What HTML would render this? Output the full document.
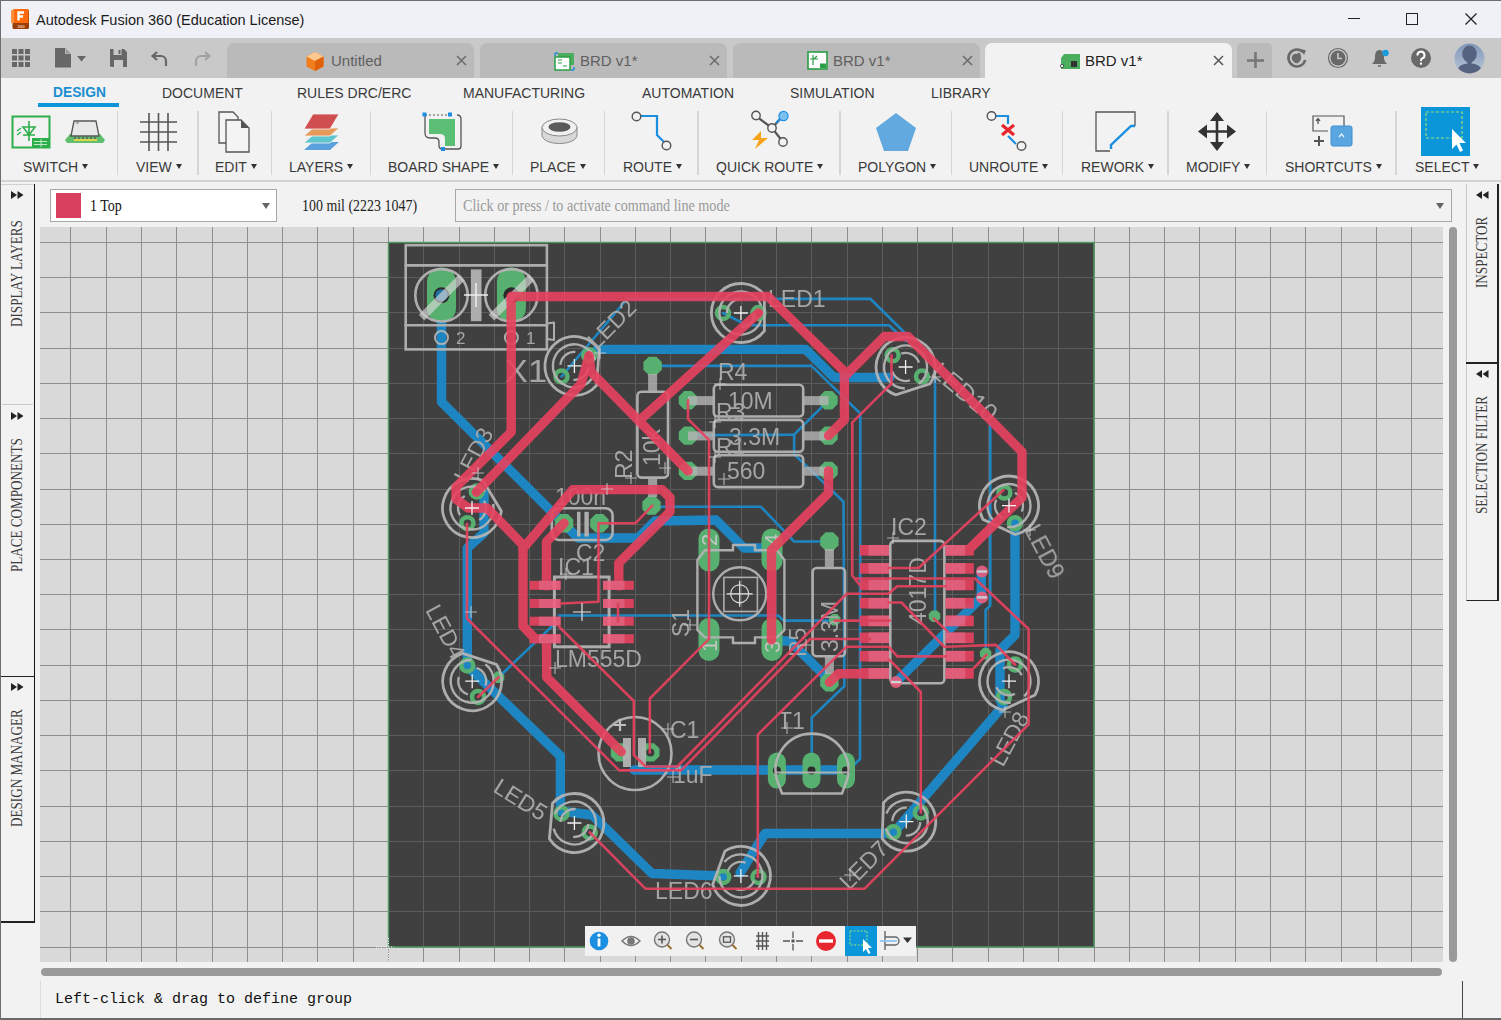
<!DOCTYPE html>
<html><head><meta charset="utf-8">
<style>
*{margin:0;padding:0;box-sizing:border-box}
html,body{width:1501px;height:1020px;overflow:hidden;background:#f2f2f2;font-family:"Liberation Sans",sans-serif;position:relative}
.a{position:absolute}
.tab{position:absolute;top:43px;height:35px;width:247px;background:#bababa;border-radius:7px 7px 0 0}
.tab .t{position:absolute;top:9px;font-size:15px;color:#606060;white-space:nowrap;line-height:18px}
.tab svg.x{position:absolute;top:12px}
.rt{position:absolute;top:85px;font-size:14px;color:#3a3a3a;white-space:nowrap;line-height:16px}
.lbl{position:absolute;top:159px;font-size:14px;color:#3a3a3a;white-space:nowrap;line-height:16px}
.lbl i{display:inline-block;margin-left:4px;width:0;height:0;border-left:3.5px solid transparent;border-right:3.5px solid transparent;border-top:5px solid #333;vertical-align:3px}
.sep{position:absolute;top:111px;width:1.5px;height:64px;background:#d6d6d6}
.serif{font-family:"Liberation Serif",serif}
.vt{position:absolute;font-family:"Liberation Serif",serif;font-size:16px;color:#3c3c3c;white-space:nowrap;transform-origin:0 0;transform:rotate(-90deg) scaleX(0.82);line-height:16px}
.ico{position:absolute}
</style></head><body>
<div class="a" style="left:0;top:0;width:1501px;height:38px;background:#f0f1f6"></div>
<svg class="a" style="left:11px;top:9px" width="19" height="20" viewBox="0 0 19 20">
  <path d="M3 0H16A2 2 0 0 1 18 2V19H2V2Z" fill="#c85200"/>
  <path d="M0 2L3 0H16A1.5 1.5 0 0 1 17 1.5V14H0Z" fill="#ff6b0a"/>
  <path d="M0 2L3 0V14H0Z" fill="#ff9040"/>
  <path d="M1.5 14H18V18.5A1.5 1.5 0 0 1 16.5 20H3A1.5 1.5 0 0 1 1.5 18.5Z" fill="#9a3d08"/>
  <path d="M7.5 11.5V3.5H13M7.5 7.5H12" fill="none" stroke="#fff" stroke-width="2.3"/>
  <text x="10" y="18.6" font-size="4.4" font-weight="bold" fill="#f0c8a8" text-anchor="middle" font-family="Liberation Sans">360</text>
</svg>
<div class="a" style="left:36px;top:11px;font-size:14.5px;color:#1a1a1a;white-space:nowrap;line-height:18px">Autodesk Fusion 360 (Education License)</div>
<div class="a" style="left:1348px;top:18px;width:12px;height:1.2px;background:#222"></div>
<div class="a" style="left:1406px;top:13px;width:12px;height:12px;border:1.3px solid #222"></div>
<svg class="a" style="left:1464px;top:12px" width="14" height="14" viewBox="0 0 14 14"><path d="M1.5 1.5L12.5 12.5M12.5 1.5L1.5 12.5" stroke="#222" stroke-width="1.3"/></svg>

<div class="a" style="left:0;top:38px;width:1501px;height:40px;background:#c9c9c9"></div>
<!-- tabbar left icons -->
<svg class="a" style="left:11px;top:48px" width="20" height="20" viewBox="0 0 20 20" fill="#676767">
  <rect x="1" y="1" width="5" height="5"/><rect x="7.5" y="1" width="5" height="5"/><rect x="14" y="1" width="5" height="5"/>
  <rect x="1" y="7.5" width="5" height="5"/><rect x="7.5" y="7.5" width="5" height="5"/><rect x="14" y="7.5" width="5" height="5"/>
  <rect x="1" y="14" width="5" height="5"/><rect x="7.5" y="14" width="5" height="5"/><rect x="14" y="14" width="5" height="5"/>
</svg>
<svg class="a" style="left:53px;top:47px" width="36" height="22" viewBox="0 0 36 22" fill="#676767">
  <path d="M2 1H12L18 7V20.5H2Z"/><path d="M12 1V7H18" fill="#c9c9c9" stroke="#676767" stroke-width="0"/>
  <path d="M12.5 1.5L17.5 6.5H12.5Z" fill="#9a9a9a"/>
  <path d="M24 9H33L28.5 14.5Z"/>
</svg>
<svg class="a" style="left:109px;top:48px" width="19" height="20" viewBox="0 0 19 20" fill="#676767">
  <path d="M1 1H15L18 4V19H2L1 18Z"/><rect x="4.5" y="1" width="8" height="6" fill="#c9c9c9"/><rect x="9.5" y="2" width="2" height="4" fill="#676767"/>
  <rect x="5" y="12" width="9" height="7" fill="#c9c9c9"/>
</svg>
<svg class="a" style="left:150px;top:50px" width="19" height="17" viewBox="0 0 19 17"><path d="M16 16V11A5 5 0 0 0 11 6H3M7 2L2.5 6L7 10" fill="none" stroke="#676767" stroke-width="2.2"/></svg>
<svg class="a" style="left:193px;top:50px" width="19" height="17" viewBox="0 0 19 17"><path d="M3 16V11A5 5 0 0 1 8 6H16M12 2L16.5 6L12 10" fill="none" stroke="#a2a2a2" stroke-width="2.2"/></svg>

<div class="tab" style="left:227px">
  <svg class="a" style="left:78px;top:8px" width="20" height="21" viewBox="0 0 20 21">
    <path d="M10 1L18.5 5.5V15.5L10 20L1.5 15.5V5.5Z" fill="#f07c1c"/>
    <path d="M10 1L18.5 5.5L10 10L1.5 5.5Z" fill="#ffc890"/>
    <path d="M10 10L18.5 5.5V15.5L10 20Z" fill="#e0600c"/>
  </svg>
  <div class="t" style="left:104px">Untitled</div>
  <svg class="x" style="left:229px" width="11" height="11" viewBox="0 0 11 11"><path d="M1 1L10 10M10 1L1 10" stroke="#6a6a6a" stroke-width="1.5"/></svg>
</div>
<div class="tab" style="left:480px">
  <svg class="a" style="left:74px;top:9px" width="21" height="19" viewBox="0 0 21 19">
    <rect x="4" y="1" width="16" height="12" fill="#4bae5e"/><rect x="1" y="5" width="15" height="13" fill="#fff" stroke="#2a9e45" stroke-width="1.5"/>
    <path d="M4 8H8M4 11H8M9 14H13" stroke="#2a9e45" stroke-width="1.2"/><path d="M1 1V4M1 1H4M20 18H17M20 18V15" stroke="#1f8fd6" stroke-width="1.5"/>
  </svg>
  <div class="t" style="left:100px">BRD v1*</div>
  <svg class="x" style="left:229px" width="11" height="11" viewBox="0 0 11 11"><path d="M1 1L10 10M10 1L1 10" stroke="#6a6a6a" stroke-width="1.5"/></svg>
</div>
<div class="tab" style="left:733px">
  <svg class="a" style="left:74px;top:8px" width="21" height="19" viewBox="0 0 21 19">
    <rect x="1" y="1" width="19" height="17" fill="#fff" stroke="#2a9e45" stroke-width="1.6"/>
    <path d="M6 4V14M3 8H11M7 8L10 5M13 13H19" stroke="#2a9e45" stroke-width="1.2"/><rect x="13" y="13" width="6" height="4" fill="#2a9e45"/>
  </svg>
  <div class="t" style="left:100px">BRD v1*</div>
  <svg class="x" style="left:229px" width="11" height="11" viewBox="0 0 11 11"><path d="M1 1L10 10M10 1L1 10" stroke="#6a6a6a" stroke-width="1.5"/></svg>
</div>
<div class="tab" style="left:985px;background:#f2f2f2">
  <svg class="a" style="left:74px;top:10px" width="22" height="17" viewBox="0 0 22 17">
    <path d="M5 1H21V16H2V5Z" fill="#4bae5e"/><rect x="12" y="8" width="6" height="6" fill="#333"/><circle cx="3" cy="13" r="1.6" fill="#fff" stroke="#333" stroke-width="0.8"/>
  </svg>
  <div class="t" style="left:100px;color:#1e1e1e">BRD v1*</div>
  <svg class="x" style="left:228px" width="11" height="11" viewBox="0 0 11 11"><path d="M1 1L10 10M10 1L1 10" stroke="#555" stroke-width="1.5"/></svg>
</div>
<div class="a" style="left:1237px;top:43px;width:35px;height:35px;background:#bababa;border-radius:5px 5px 0 0"></div>
<svg class="a" style="left:1246px;top:51px" width="19" height="18" viewBox="0 0 19 18"><path d="M1 9.5H18M9.5 1V17" stroke="#767676" stroke-width="2.6"/></svg>
<svg class="a" style="left:1286px;top:47px" width="22" height="22" viewBox="0 0 22 22">
  <path d="M17.5 5.5A8.5 8.5 0 1 0 19.2 13" fill="none" stroke="#696969" stroke-width="2.6"/>
  <path d="M15 2L20 3.5L18 8Z" fill="#696969"/>
  <path d="M6 9Q8 6 11 7Q12 5 14 6L15 9Q16 13 12 16Q9 17 7 14Q5 12 6 9Z" fill="#696969"/>
</svg>
<svg class="a" style="left:1327px;top:47px" width="22" height="22" viewBox="0 0 22 22">
  <circle cx="11" cy="11" r="9.5" fill="none" stroke="#696969" stroke-width="1.2"/>
  <circle cx="11" cy="11" r="7.5" fill="#696969"/>
  <path d="M11 6V11.5H15" fill="none" stroke="#c9c9c9" stroke-width="1.6"/>
</svg>
<svg class="a" style="left:1370px;top:47px" width="22" height="22" viewBox="0 0 22 22">
  <path d="M9.5 3C5.5 3 5 7 5 11C5 14 3 16 2 17H17C16 16 14 14 14 11C14 7 13.5 3 9.5 3Z" fill="#696969"/>
  <path d="M8 19H11" stroke="#696969" stroke-width="1.5"/>
  <circle cx="15.5" cy="6" r="3.2" fill="#1a9be0"/>
</svg>
<svg class="a" style="left:1410px;top:47px" width="22" height="22" viewBox="0 0 22 22">
  <circle cx="11" cy="11" r="10" fill="#696969"/>
  <path d="M7.5 8.5A3.5 3.5 0 1 1 12 11.5C11 12 11 12.5 11 14" fill="none" stroke="#fff" stroke-width="2"/>
  <rect x="10" y="15.5" width="2" height="2.2" fill="#fff"/>
</svg>
<svg class="a" style="left:1454px;top:43px" width="31" height="31" viewBox="0 0 31 31">
  <defs><linearGradient id="av" x1="0" y1="0" x2="0" y2="1"><stop offset="0" stop-color="#8098b8"/><stop offset="1" stop-color="#b8c6d8"/></linearGradient>
  <clipPath id="avc"><circle cx="15.5" cy="15.5" r="15"/></clipPath></defs>
  <circle cx="15.5" cy="15.5" r="15" fill="url(#av)"/>
  <g clip-path="url(#avc)" fill="#566380"><ellipse cx="15.5" cy="11" rx="7.3" ry="8.5"/><path d="M2 31C3 23 8 20.5 15.5 20.5C23 20.5 28 23 29 31Z"/><path d="M11 15L15.5 24L20 15Z"/></g>
</svg>
<div class="a" style="left:0;top:180px;width:1501px;height:1.5px;background:#d4d4d4"></div>
<div class="rt" style="left:53px;color:#1a8fd0;font-weight:bold;font-size:13.8px">DESIGN</div>
<div class="a" style="left:38px;top:103px;width:81px;height:4px;background:#0a96d8"></div>
<div class="rt" style="left:162px">DOCUMENT</div>
<div class="rt" style="left:297px">RULES DRC/ERC</div>
<div class="rt" style="left:463px">MANUFACTURING</div>
<div class="rt" style="left:642px">AUTOMATION</div>
<div class="rt" style="left:790px">SIMULATION</div>
<div class="rt" style="left:931px">LIBRARY</div>

<div class="sep" style="left:116.5px"></div><div class="sep" style="left:197px"></div><div class="sep" style="left:270.5px"></div><div class="sep" style="left:369.5px"></div>
<div class="sep" style="left:511.5px"></div><div class="sep" style="left:603.5px"></div><div class="sep" style="left:697px"></div><div class="sep" style="left:839px"></div>
<div class="sep" style="left:950.5px"></div><div class="sep" style="left:1061.5px"></div><div class="sep" style="left:1167px"></div><div class="sep" style="left:1265.5px"></div><div class="sep" style="left:1395px"></div>

<div class="lbl" style="left:23px">SWITCH<i></i></div>
<div class="lbl" style="left:136px">VIEW<i></i></div>
<div class="lbl" style="left:215px">EDIT<i></i></div>
<div class="lbl" style="left:289px">LAYERS<i></i></div>
<div class="lbl" style="left:388px">BOARD SHAPE<i></i></div>
<div class="lbl" style="left:530px">PLACE<i></i></div>
<div class="lbl" style="left:623px">ROUTE<i></i></div>
<div class="lbl" style="left:716px">QUICK ROUTE<i></i></div>
<div class="lbl" style="left:858px">POLYGON<i></i></div>
<div class="lbl" style="left:969px">UNROUTE<i></i></div>
<div class="lbl" style="left:1081px">REWORK<i></i></div>
<div class="lbl" style="left:1186px">MODIFY<i></i></div>
<div class="lbl" style="left:1285px">SHORTCUTS<i></i></div>
<div class="lbl" style="left:1415px">SELECT<i></i></div>

<!-- switch icon 1 -->
<svg class="ico" style="left:11px;top:115px" width="40" height="34" viewBox="0 0 40 34">
  <rect x="1.5" y="1.5" width="37" height="31" fill="none" stroke="#2eae4a" stroke-width="2"/>
  <path d="M18 6V26M12 12H24L18 20ZM12 20H24" fill="none" stroke="#2eae4a" stroke-width="1.6"/>
  <path d="M6 16L10 13M6 20L10 17" stroke="#2eae4a" stroke-width="1.3"/>
  <rect x="21" y="23" width="17" height="10" fill="#2eae4a"/>
  <path d="M23 26.5H36M23 29.5H36M30 24V32" stroke="#bfe8c8" stroke-width="1"/>
</svg>
<!-- switch icon 2 chip -->
<svg class="ico" style="left:64px;top:119px" width="42" height="26" viewBox="0 0 42 26">
  <path d="M1 21L6 15H36L41 21L39 24H3Z" fill="#5fbf6e"/>
  <path d="M7 17L10 2H32L35 17Z" fill="#e8e8e8" stroke="#555" stroke-width="1.3"/>
  <path d="M11 18V21M15 18V21M19 18V21M23 18V21M27 18V21M31 18V21" stroke="#555" stroke-width="1.4"/>
  <path d="M10 21H33" stroke="#e6d24a" stroke-width="2"/>
  <path d="M12 4H15" stroke="#777" stroke-width="1"/>
</svg>
<!-- view grid -->
<svg class="ico" style="left:139px;top:112px" width="39" height="40" viewBox="0 0 39 40"><path d="M10 1V39M19.5 1V39M29 1V39M1 10H38M1 20H38M1 30H38" stroke="#555" stroke-width="1.6"/></svg>
<!-- edit pages -->
<svg class="ico" style="left:217px;top:111px" width="36" height="42" viewBox="0 0 36 42">
  <path d="M2 1H16L21 6V32H2Z" fill="#f4f4f4" stroke="#555" stroke-width="1.3"/>
  <path d="M9 9H24L32 17V41H9Z" fill="#f4f4f4" stroke="#555" stroke-width="1.3"/>
  <path d="M24 9L32 17H24Z" fill="#555"/>
</svg>
<!-- layers -->
<svg class="ico" style="left:303px;top:112px" width="37" height="40" viewBox="0 0 37 40">
  <path d="M1 38L10 30H36L27 38Z" fill="#5aa0dd"/>
  <path d="M1 31L10 23H36L27 31Z" fill="#5ec6cc" stroke="#f2f2f2" stroke-width="0.8"/>
  <path d="M1 24L10 16H36L27 24Z" fill="#e89a5a" stroke="#f2f2f2" stroke-width="0.8"/>
  <path d="M1 17L10 2H36L27 17Z" fill="#cf4e50" stroke="#f2f2f2" stroke-width="0.8"/>
</svg>
<!-- board shape -->
<svg class="ico" style="left:421px;top:111px" width="42" height="41" viewBox="0 0 42 41">
  <path d="M4 4V22Q4 27 9 27H14Q18 27 18 31V35Q18 38 22 38H37Q40 38 40 35V8Q40 4 36 4" fill="none" stroke="#555" stroke-width="1.3"/>
  <path d="M4 4H26" stroke="#555" stroke-width="1" stroke-dasharray="2 2"/>
  <path d="M8 8H34V35H24V28Q24 23 19 23H8Z" fill="#5cbf76"/>
  <rect x="1.5" y="1.5" width="4" height="4" fill="#1c8ee0"/><rect x="27" y="1.5" width="4" height="4" fill="#1c8ee0"/><rect x="20" y="36" width="4" height="4" fill="#1c8ee0"/>
</svg>
<!-- place washer -->
<svg class="ico" style="left:541px;top:118px" width="37" height="27" viewBox="0 0 37 27">
  <path d="M1 9V17C1 22 9 25.5 18.5 25.5C28 25.5 36 22 36 17V9Z" fill="#d8d8d8" stroke="#8a8a8a" stroke-width="1"/>
  <ellipse cx="18.5" cy="9.5" rx="17.5" ry="8.5" fill="#f0f0f0" stroke="#8a8a8a" stroke-width="1"/>
  <ellipse cx="18.5" cy="9" rx="11" ry="4.8" fill="#5a5a5a"/>
</svg>
<!-- route -->
<svg class="ico" style="left:631px;top:111px" width="42" height="41" viewBox="0 0 42 41">
  <path d="M9 5H26V24L34 32" fill="none" stroke="#1c8ee0" stroke-width="2.2"/>
  <circle cx="5.5" cy="5.5" r="4.3" fill="#f2f2f2" stroke="#555" stroke-width="1.4"/>
  <circle cx="35.5" cy="34.5" r="4.3" fill="#f2f2f2" stroke="#555" stroke-width="1.4"/>
</svg>
<!-- quick route -->
<svg class="ico" style="left:750px;top:110px" width="42" height="43" viewBox="0 0 42 43">
  <path d="M6 6L22 18L33 6M22 18L33 32" fill="none" stroke="#555" stroke-width="2.2"/>
  <path d="M26 13L32 7" stroke="#1c8ee0" stroke-width="2.2"/>
  <circle cx="6" cy="5.5" r="4.2" fill="#f2f2f2" stroke="#555" stroke-width="1.4"/>
  <circle cx="22" cy="18" r="4.2" fill="#f2f2f2" stroke="#555" stroke-width="1.4"/>
  <circle cx="33" cy="32" r="4.2" fill="#f2f2f2" stroke="#555" stroke-width="1.4"/>
  <circle cx="33.5" cy="6" r="4.6" fill="#7cc0f0" stroke="#1c8ee0" stroke-width="1.2"/>
  <path d="M11 21L2 30H9L5 39L18 28H11Z" fill="#f5a31a"/>
</svg>
<!-- polygon -->
<svg class="ico" style="left:875px;top:112px" width="42" height="40" viewBox="0 0 42 40"><path d="M21 1L41 16L33 39H9L1 16Z" fill="#62a9df"/></svg>
<!-- unroute -->
<svg class="ico" style="left:986px;top:110px" width="42" height="43" viewBox="0 0 42 43">
  <path d="M9 6H22V14M22 26L30 34" fill="none" stroke="#1c8ee0" stroke-width="2.2"/>
  <path d="M16 15L28 25M28 15L16 25" stroke="#e8262e" stroke-width="3.2"/>
  <circle cx="5.5" cy="6" r="4.3" fill="#f2f2f2" stroke="#555" stroke-width="1.4"/>
  <circle cx="35.5" cy="36" r="4.3" fill="#f2f2f2" stroke="#555" stroke-width="1.4"/>
</svg>
<!-- rework -->
<svg class="ico" style="left:1095px;top:111px" width="42" height="41" viewBox="0 0 42 41">
  <path d="M40 15V1H1V40H15" fill="none" stroke="#555" stroke-width="1.3"/>
  <path d="M16 38V34L36 15H40" fill="none" stroke="#1c8ee0" stroke-width="2.4"/>
</svg>
<!-- modify -->
<svg class="ico" style="left:1197px;top:111px" width="40" height="41" viewBox="0 0 40 41">
  <path d="M20 4V37M3 20.5H37" stroke="#333" stroke-width="2.6"/>
  <path d="M20 1L27 10H13ZM20 40L27 31H13ZM1 20.5L10 13.5V27.5ZM39 20.5L30 13.5V27.5Z" fill="#333"/>
</svg>
<!-- shortcuts -->
<svg class="ico" style="left:1312px;top:115px" width="41" height="33" viewBox="0 0 41 33">
  <path d="M32 11V1H1V16H16" fill="none" stroke="#555" stroke-width="1.2"/>
  <path d="M6 9V4M4 6L6 3.5L8 6" fill="none" stroke="#555" stroke-width="1.3"/>
  <path d="M2 26H12M7 21V31" stroke="#555" stroke-width="2"/>
  <rect x="19" y="11" width="21" height="20" rx="2" fill="#5aa6e0" stroke="#3f8fd0" stroke-width="1"/>
  <path d="M27 22L29.5 19L32 22" fill="none" stroke="#e8f4ff" stroke-width="1.2"/>
</svg>
<!-- select -->
<svg class="ico" style="left:1421px;top:107px" width="49" height="49" viewBox="0 0 49 49">
  <rect x="0" y="0" width="49" height="49" fill="#0a96d8"/>
  <rect x="5" y="5" width="36" height="26" fill="none" stroke="#9be07a" stroke-width="1.2" stroke-dasharray="3 2"/>
  <path d="M31 22V42L35.5 37.5L39 45L42 43.5L38.5 36H45Z" fill="#fff"/>
</svg>
<!-- command row -->
<div class="a" style="left:50px;top:189px;width:227px;height:33px;background:#fff;border:1.5px solid #a8a8a8"></div>
<div class="a" style="left:56px;top:193px;width:25px;height:25px;background:#d9405e"></div>
<div class="a serif" style="left:89.5px;top:196.5px;font-size:16.5px;color:#111;line-height:18px;transform-origin:0 0;transform:scaleX(0.85)">1 Top</div>
<div class="a" style="left:262px;top:203px;width:0;height:0;border-left:4px solid transparent;border-right:4px solid transparent;border-top:6px solid #666"></div>
<div class="a serif" style="left:302px;top:196.5px;font-size:16.5px;color:#222;line-height:18px;transform-origin:0 0;transform:scaleX(0.845)">100 mil (2223 1047)</div>
<div class="a" style="left:455px;top:189px;width:997px;height:33px;border:1.5px solid #a8a8a8"></div>
<div class="a serif" style="left:463px;top:196.5px;font-size:16.5px;color:#999;line-height:18px;transform-origin:0 0;transform:scaleX(0.856)">Click or press / to activate command line mode</div>
<div class="a" style="left:1436px;top:203px;width:0;height:0;border-left:4px solid transparent;border-right:4px solid transparent;border-top:6px solid #666"></div>

<!-- left panels -->
<div class="a" style="left:1px;top:184px;width:33.5px;height:739px;border-right:1.4px solid #111"></div>
<div class="a" style="left:1px;top:184px;width:32px;height:1px;background:#d0d0d0"></div>
<div class="a" style="left:2px;top:404px;width:31px;height:1px;background:#c8c8c8"></div>
<div class="a" style="left:1px;top:675.5px;width:33px;height:1.5px;background:#222"></div>
<div class="a" style="left:1px;top:921px;width:33px;height:1.5px;background:#222"></div>
<svg class="a" style="left:11px;top:191px" width="13" height="8" viewBox="0 0 13 8"><path d="M0 0L6 4L0 8ZM6.5 0L12.5 4L6.5 8Z" fill="#222"/></svg>
<svg class="a" style="left:11px;top:412px" width="13" height="8" viewBox="0 0 13 8"><path d="M0 0L6 4L0 8ZM6.5 0L12.5 4L6.5 8Z" fill="#222"/></svg>
<svg class="a" style="left:11px;top:683px" width="13" height="8" viewBox="0 0 13 8"><path d="M0 0L6 4L0 8ZM6.5 0L12.5 4L6.5 8Z" fill="#222"/></svg>
<div class="vt" style="left:9px;top:327px">DISPLAY LAYERS</div>
<div class="vt" style="left:9px;top:572px">PLACE COMPONENTS</div>
<div class="vt" style="left:9px;top:827px">DESIGN MANAGER</div>

<!-- right panels -->
<div class="a" style="left:1466px;top:184px;width:33px;height:417px;border-left:1px solid #c8c8c8;border-right:2px solid #222;border-bottom:1.5px solid #222"></div>
<div class="a" style="left:1466px;top:362px;width:33px;height:1.5px;background:#222"></div>
<svg class="a" style="left:1476px;top:191px" width="13" height="8" viewBox="0 0 13 8"><path d="M6 0L0 4L6 8ZM12.5 0L6.5 4L12.5 8Z" fill="#222"/></svg>
<svg class="a" style="left:1476px;top:370px" width="13" height="8" viewBox="0 0 13 8"><path d="M6 0L0 4L6 8ZM12.5 0L6.5 4L12.5 8Z" fill="#222"/></svg>
<div class="vt" style="left:1474px;top:288px">INSPECTOR</div>
<div class="vt" style="left:1474px;top:514px">SELECTION FILTER</div>

<!-- scrollbars -->
<div class="a" style="left:1449px;top:227px;width:8px;height:735px;background:#9a9a9a;border-radius:4px"></div>
<div class="a" style="left:41px;top:968px;width:1401px;height:8px;background:#9a9a9a;border-radius:4px"></div>

<!-- status -->
<div class="a" style="left:40px;top:981px;width:1423px;height:39px;border-left:1px solid #dcdcdc;border-right:1.5px solid #444"></div>
<div class="a" style="left:0;top:1018px;width:1501px;height:2px;background:#6a6a6a"></div>
<div class="a" style="left:55px;top:991px;font-family:'Liberation Mono',monospace;font-size:15px;color:#111;line-height:18px">Left-click &amp; drag to define group</div>
<div class="a" style="left:0;top:0;width:1501px;height:1px;background:#6e6e6e"></div>
<div class="a" style="left:0;top:0;width:1px;height:1020px;background:#6e6e6e"></div>
<svg class="a" style="left:0;top:0" width="1501" height="1020" viewBox="0 0 1501 1020"><rect x="40" y="227" width="1403" height="735" fill="#d9d9d9"/><path d="M70.5 227V962M106.5 227V962M141.5 227V962M176.5 227V962M212.5 227V962M247.5 227V962M282.5 227V962M317.5 227V962M353.5 227V962M388.5 227V962M423.5 227V962M459.5 227V962M494.5 227V962M529.5 227V962M564.5 227V962M600.5 227V962M635.5 227V962M670.5 227V962M705.5 227V962M741.5 227V962M776.5 227V962M811.5 227V962M847.5 227V962M882.5 227V962M917.5 227V962M952.5 227V962M988.5 227V962M1023.5 227V962M1058.5 227V962M1094.5 227V962M1129.5 227V962M1164.5 227V962M1199.5 227V962M1235.5 227V962M1270.5 227V962M1305.5 227V962M1341.5 227V962M1376.5 227V962M1411.5 227V962M40 242.50H1443M40 277.50H1443M40 312.50H1443M40 348.50H1443M40 383.50H1443M40 418.50H1443M40 453.50H1443M40 489.50H1443M40 524.50H1443M40 559.50H1443M40 594.50H1443M40 629.50H1443M40 665.50H1443M40 700.50H1443M40 735.50H1443M40 770.50H1443M40 806.50H1443M40 841.50H1443M40 876.50H1443M40 911.50H1443M40 947.50H1443" stroke="#8e8e8e" stroke-width="1"/><rect x="388.5" y="242.5" width="705.5" height="704.5" fill="#404040"/><path d="M423.50 242.5V947M459.50 242.5V947M494.50 242.5V947M529.50 242.5V947M564.50 242.5V947M600.50 242.5V947M635.50 242.5V947M670.50 242.5V947M705.50 242.5V947M741.50 242.5V947M776.50 242.5V947M811.50 242.5V947M847.50 242.5V947M882.50 242.5V947M917.50 242.5V947M952.50 242.5V947M988.50 242.5V947M1023.50 242.5V947M1058.50 242.5V947M388.5 277.50H1094M388.5 312.50H1094M388.5 348.50H1094M388.5 383.50H1094M388.5 418.50H1094M388.5 453.50H1094M388.5 489.50H1094M388.5 524.50H1094M388.5 559.50H1094M388.5 594.50H1094M388.5 629.50H1094M388.5 665.50H1094M388.5 700.50H1094M388.5 735.50H1094M388.5 770.50H1094M388.5 806.50H1094M388.5 841.50H1094M388.5 876.50H1094M388.5 911.50H1094" stroke="#5c5c5c" stroke-width="1"/><rect x="388.5" y="242.5" width="705.5" height="704.5" fill="none" stroke="#4f9a62" stroke-width="1.4"/><polyline points="441.5,295.0 441.5,402.0 520.0,480.0 563.0,523.0 578.0,538.0 638.0,538.0 655.0,521.0 716.0,520.0 744.0,548.0 771.0,548.0" fill="none" stroke="#1d86c2" stroke-width="9.4" stroke-linejoin="round" stroke-linecap="round" opacity="1"/><polyline points="597.0,349.4 805.6,349.4 834.0,377.5 890.0,377.5" fill="none" stroke="#1d86c2" stroke-width="9.4" stroke-linejoin="round" stroke-linecap="round" opacity="1"/><polyline points="467.3,666.0 467.3,548.0 484.0,533.0 484.0,494.0" fill="none" stroke="#1d86c2" stroke-width="9.4" stroke-linejoin="round" stroke-linecap="round" opacity="1"/><polyline points="467.3,666.0 560.4,756.0 560.4,811.0 592.0,815.0 652.0,873.5 723.0,876.0" fill="none" stroke="#1d86c2" stroke-width="9.4" stroke-linejoin="round" stroke-linecap="round" opacity="1"/><polyline points="740.0,873.0 765.0,833.5 855.0,833.5 893.0,833.5 1003.0,706.0 1000.0,700.0 1000.0,650.0 1015.0,635.0 1015.0,523.0" fill="none" stroke="#1d86c2" stroke-width="9.4" stroke-linejoin="round" stroke-linecap="round" opacity="1"/><polyline points="775.0,641.0 790.0,641.0 829.0,680.0" fill="none" stroke="#1d86c2" stroke-width="9.4" stroke-linejoin="round" stroke-linecap="round" opacity="1"/><polyline points="982.0,597.0 896.0,682.0" fill="none" stroke="#1d86c2" stroke-width="9.4" stroke-linejoin="round" stroke-linecap="round" opacity="1"/><polyline points="981.3,571.2 981.3,597.0" fill="none" stroke="#1d86c2" stroke-width="9.4" stroke-linejoin="round" stroke-linecap="round" opacity="1"/><polyline points="634.0,770.0 846.0,770.0" fill="none" stroke="#1d86c2" stroke-width="9.4" stroke-linejoin="round" stroke-linecap="round" opacity="1"/><polyline points="561.5,376.5 627.0,299.0 870.3,298.8 906.0,334.0" fill="none" stroke="#1d86c2" stroke-width="2.6" stroke-linejoin="round" stroke-linecap="round" opacity="1"/><polyline points="723.0,313.0 746.8,325.2 889.0,325.2 906.0,341.0" fill="none" stroke="#1d86c2" stroke-width="2.6" stroke-linejoin="round" stroke-linecap="round" opacity="1"/><polyline points="652.6,365.9 811.5,365.9 860.3,413.5 860.0,759.0 849.2,769.8" fill="none" stroke="#1d86c2" stroke-width="2.6" stroke-linejoin="round" stroke-linecap="round" opacity="1"/><polyline points="935.0,378.8 935.0,616.2" fill="none" stroke="#1d86c2" stroke-width="2.6" stroke-linejoin="round" stroke-linecap="round" opacity="1"/><polyline points="990.3,423.5 990.3,605.6 985.6,610.0 985.6,653.8" fill="none" stroke="#1d86c2" stroke-width="2.6" stroke-linejoin="round" stroke-linecap="round" opacity="1"/><polyline points="828.5,400.3 794.1,434.7 688.0,435.3" fill="none" stroke="#1d86c2" stroke-width="2.6" stroke-linejoin="round" stroke-linecap="round" opacity="1"/><polyline points="794.1,434.7 794.1,454.1 843.5,501.8 844.4,686.0 811.8,717.6 811.8,770.0" fill="none" stroke="#1d86c2" stroke-width="2.6" stroke-linejoin="round" stroke-linecap="round" opacity="1"/><polyline points="829.4,541.5 794.1,541.5 760.9,506.8 652.0,506.8" fill="none" stroke="#1d86c2" stroke-width="2.6" stroke-linejoin="round" stroke-linecap="round" opacity="1"/><polyline points="558.8,615.5 778.2,615.5 783.5,620.6 834.7,620.6" fill="none" stroke="#1d86c2" stroke-width="2.6" stroke-linejoin="round" stroke-linecap="round" opacity="1"/><polyline points="551.8,626.5 498.6,677.3" fill="none" stroke="#1d86c2" stroke-width="2.6" stroke-linejoin="round" stroke-linecap="round" opacity="1"/><polygon points="661.8,362.1 661.8,369.7 656.4,375.1 648.8,375.1 643.4,369.7 643.4,362.1 648.8,356.7 656.4,356.7" fill="#57b06f"/><polygon points="660.7,501.8 660.7,509.4 655.3,514.8 647.7,514.8 642.3,509.4 642.3,501.8 647.7,496.4 655.3,496.4" fill="#57b06f"/><polygon points="697.2,396.5 697.2,404.1 691.8,409.5 684.2,409.5 678.8,404.1 678.8,396.5 684.2,391.1 691.8,391.1" fill="#57b06f"/><polygon points="697.2,431.8 697.2,439.4 691.8,444.8 684.2,444.8 678.8,439.4 678.8,431.8 684.2,426.4 691.8,426.4" fill="#57b06f"/><polygon points="697.2,467.1 697.2,474.7 691.8,480.1 684.2,480.1 678.8,474.7 678.8,467.1 684.2,461.7 691.8,461.7" fill="#57b06f"/><polygon points="837.7,396.5 837.7,404.1 832.3,409.5 824.7,409.5 819.3,404.1 819.3,396.5 824.7,391.1 832.3,391.1" fill="#57b06f"/><polygon points="837.7,431.8 837.7,439.4 832.3,444.8 824.7,444.8 819.3,439.4 819.3,431.8 824.7,426.4 832.3,426.4" fill="#57b06f"/><polygon points="837.7,467.1 837.7,474.7 832.3,480.1 824.7,480.1 819.3,474.7 819.3,467.1 824.7,461.7 832.3,461.7" fill="#57b06f"/><polygon points="838.6,537.7 838.6,545.3 833.2,550.7 825.6,550.7 820.2,545.3 820.2,537.7 825.6,532.3 833.2,532.3" fill="#57b06f"/><polygon points="838.6,678.5 838.6,686.1 833.2,691.5 825.6,691.5 820.2,686.1 820.2,678.5 825.6,673.1 833.2,673.1" fill="#57b06f"/><polygon points="573.3,519.4 573.3,527.0 567.9,532.4 560.3,532.4 554.9,527.0 554.9,519.4 560.3,514.0 567.9,514.0" fill="#57b06f"/><polygon points="608.6,519.4 608.6,527.0 603.2,532.4 595.6,532.4 590.2,527.0 590.2,519.4 595.6,514.0 603.2,514.0" fill="#57b06f"/><polygon points="659.5,748.6 659.5,756.2 654.1,761.6 646.5,761.6 641.1,756.2 641.1,748.6 646.5,743.2 654.1,743.2" fill="#57b06f"/><polygon points="629.2,748.6 629.2,756.2 623.8,761.6 616.2,761.6 610.8,756.2 610.8,748.6 616.2,743.2 623.8,743.2" fill="#57b06f"/><polygon points="940.2,613.8 940.2,618.6 936.9,621.9 932.1,621.9 928.8,618.6 928.8,613.8 932.1,610.5 936.9,610.5" fill="#57b06f"/><polygon points="991.3,651.4 991.3,656.2 988.0,659.5 983.2,659.5 979.9,656.2 979.9,651.4 983.2,648.1 988.0,648.1" fill="#57b06f"/><polygon points="840.4,617.3 840.4,622.1 837.1,625.4 832.3,625.4 829.0,622.1 829.0,617.3 832.3,614.0 837.1,614.0" fill="#57b06f"/><polygon points="504.3,674.9 504.3,679.7 501.0,683.0 496.2,683.0 492.9,679.7 492.9,674.9 496.2,671.6 501.0,671.6" fill="#57b06f"/><rect x="427.0" y="267.5" width="29" height="55" rx="14.5" fill="#57b06f"/><rect x="496.9" y="267.5" width="29" height="55" rx="14.5" fill="#57b06f"/><rect x="698.5" y="618.0" width="21" height="43" rx="10.5" fill="#57b06f"/><rect x="698.5" y="528.5" width="21" height="43" rx="10.5" fill="#57b06f"/><rect x="761.5" y="528.5" width="21" height="43" rx="10.5" fill="#57b06f"/><rect x="761.5" y="618.0" width="21" height="43" rx="10.5" fill="#57b06f"/><rect x="767.9" y="752.6" width="18" height="36" rx="9.0" fill="#57b06f"/><rect x="802.5" y="752.6" width="18" height="36" rx="9.0" fill="#57b06f"/><rect x="837.0" y="752.6" width="18" height="36" rx="9.0" fill="#57b06f"/><circle cx="561.5" cy="376.5" r="6" fill="none" stroke="#57b06f" stroke-width="4.5"/><circle cx="589.2" cy="355.3" r="6" fill="none" stroke="#57b06f" stroke-width="4.5"/><circle cx="723" cy="313" r="6" fill="none" stroke="#57b06f" stroke-width="4.5"/><circle cx="758.5" cy="313" r="6" fill="none" stroke="#57b06f" stroke-width="4.5"/><circle cx="892.6" cy="355.3" r="6" fill="none" stroke="#57b06f" stroke-width="4.5"/><circle cx="922" cy="376.5" r="6" fill="none" stroke="#57b06f" stroke-width="4.5"/><circle cx="476.8" cy="491.5" r="6" fill="none" stroke="#57b06f" stroke-width="4.5"/><circle cx="467.4" cy="523.2" r="6" fill="none" stroke="#57b06f" stroke-width="4.5"/><circle cx="467.3" cy="665.5" r="6" fill="none" stroke="#57b06f" stroke-width="4.5"/><circle cx="478" cy="696.9" r="6" fill="none" stroke="#57b06f" stroke-width="4.5"/><circle cx="1004.4" cy="492.6" r="6" fill="none" stroke="#57b06f" stroke-width="4.5"/><circle cx="1015" cy="523.2" r="6" fill="none" stroke="#57b06f" stroke-width="4.5"/><circle cx="1015" cy="664.5" r="6" fill="none" stroke="#57b06f" stroke-width="4.5"/><circle cx="1004" cy="696.9" r="6" fill="none" stroke="#57b06f" stroke-width="4.5"/><circle cx="561.5" cy="813.5" r="6" fill="none" stroke="#57b06f" stroke-width="4.5"/><circle cx="589.7" cy="832.4" r="6" fill="none" stroke="#57b06f" stroke-width="4.5"/><circle cx="723.2" cy="877" r="6" fill="none" stroke="#57b06f" stroke-width="4.5"/><circle cx="758.5" cy="877" r="6" fill="none" stroke="#57b06f" stroke-width="4.5"/><circle cx="920.8" cy="812.5" r="6" fill="none" stroke="#57b06f" stroke-width="4.5"/><circle cx="893.3" cy="832.2" r="6" fill="none" stroke="#57b06f" stroke-width="4.5"/><circle cx="776.9" cy="770.6" r="4" fill="#2c2c2c"/><circle cx="811.5" cy="770.6" r="4" fill="#2c2c2c"/><circle cx="846" cy="770.6" r="4" fill="#2c2c2c"/><circle cx="650.3" cy="752.4" r="4" fill="#3a3a3a"/><circle cx="441.5" cy="295.3" r="8" fill="#2a2a2a"/><circle cx="441.5" cy="295.3" r="6" fill="#1d86c2" opacity="0.8"/><circle cx="511.4" cy="295.3" r="8" fill="#2a2a2a"/><g opacity="0.95"><rect x="405.7" y="245.2" width="141.2" height="104.19999999999999" rx="0" fill="none" stroke="#b4b4b4" stroke-width="2.6"/><polyline points="405.7,265.4 546.9,265.4" fill="none" stroke="#b4b4b4" stroke-width="2.6" stroke-linejoin="round" stroke-linecap="round" opacity="1"/><polyline points="405.7,325.2 546.9,325.2" fill="none" stroke="#b4b4b4" stroke-width="2.6" stroke-linejoin="round" stroke-linecap="round" opacity="1"/><polyline points="546.9,323.5 554.0,322.5 554.0,340.0 546.9,339.0" fill="none" stroke="#b4b4b4" stroke-width="2" stroke-linejoin="round" stroke-linecap="round" opacity="1"/><circle cx="441.5" cy="295.3" r="26.2" fill="none" stroke="#b4b4b4" stroke-width="2.6"/><circle cx="511.4" cy="295.3" r="26.2" fill="none" stroke="#b4b4b4" stroke-width="2.6"/><rect x="470.9" y="269.4" width="10.6" height="51.8" fill="#b4b4b4"/><path d="M421.5 317.6L461.5 277.6M491.4 317.6L531.4 277.6" stroke="#d8d8d8" stroke-width="8" opacity="0.7"/><circle cx="441.5" cy="337.6" r="6.5" fill="none" stroke="#b4b4b4" stroke-width="2"/><circle cx="511.4" cy="337.6" r="6.5" fill="none" stroke="#b4b4b4" stroke-width="2"/><text x="456" y="343.5" font-size="17" fill="#ababab" font-family="Liberation Sans" text-anchor="start">2</text><text x="526" y="343.5" font-size="17" fill="#ababab" font-family="Liberation Sans" text-anchor="start">1</text><text x="505" y="381.5" font-size="32" fill="#ababab" font-family="Liberation Sans" textLength="42" lengthAdjust="spacingAndGlyphs">X1</text><path d="M596.60 385.33A29.5 29.5 0 1 1 599.09 349.75Z" fill="none" stroke="#b4b4b4" stroke-width="2.8"/><path d="M594.03 374.66A21.5 21.5 0 1 1 595.06 359.95" fill="none" stroke="#b4b4b4" stroke-width="2.4"/><path d="M560.43 364.92A14 14 0 0 1 575.38 351.93" fill="none" stroke="#b4b4b4" stroke-width="2.3"/><path d="M588.37 366.88A14 14 0 0 1 573.42 379.87" fill="none" stroke="#b4b4b4" stroke-width="2.3"/><path d="M764.40 330.83A29.5 29.5 0 1 1 764.40 295.17Z" fill="none" stroke="#b4b4b4" stroke-width="2.8"/><path d="M761.10 320.37A21.5 21.5 0 1 1 761.10 305.63" fill="none" stroke="#b4b4b4" stroke-width="2.4"/><path d="M726.90 313.00A14 14 0 0 1 740.90 299.00" fill="none" stroke="#b4b4b4" stroke-width="2.3"/><path d="M754.90 313.00A14 14 0 0 1 740.90 327.00" fill="none" stroke="#b4b4b4" stroke-width="2.3"/><path d="M895.90 394.86A29.5 29.5 0 1 1 929.82 383.84Z" fill="none" stroke="#b4b4b4" stroke-width="2.8"/><path d="M904.83 388.49A21.5 21.5 0 1 1 918.85 383.93" fill="none" stroke="#b4b4b4" stroke-width="2.4"/><path d="M901.27 353.69A14 14 0 0 1 918.91 362.67" fill="none" stroke="#b4b4b4" stroke-width="2.3"/><path d="M909.93 380.31A14 14 0 0 1 892.29 371.33" fill="none" stroke="#b4b4b4" stroke-width="2.3"/><path d="M501.33 511.18A29.5 29.5 0 1 1 482.96 480.61Z" fill="none" stroke="#b4b4b4" stroke-width="2.8"/><path d="M493.11 503.92A21.5 21.5 0 1 1 485.51 491.28" fill="none" stroke="#b4b4b4" stroke-width="2.4"/><path d="M460.00 515.21A14 14 0 0 1 464.79 496.00" fill="none" stroke="#b4b4b4" stroke-width="2.3"/><path d="M484.00 500.79A14 14 0 0 1 479.21 520.00" fill="none" stroke="#b4b4b4" stroke-width="2.3"/><path d="M496.42 664.36A29.5 29.5 0 1 1 462.50 653.34Z" fill="none" stroke="#b4b4b4" stroke-width="2.8"/><path d="M485.45 664.27A21.5 21.5 0 1 1 471.43 659.71" fill="none" stroke="#b4b4b4" stroke-width="2.4"/><path d="M467.87 694.51A14 14 0 0 1 458.89 676.87" fill="none" stroke="#b4b4b4" stroke-width="2.3"/><path d="M476.53 667.89A14 14 0 0 1 485.51 685.53" fill="none" stroke="#b4b4b4" stroke-width="2.3"/><path d="M982.91 519.36A29.5 29.5 0 1 1 1015.23 534.43Z" fill="none" stroke="#b4b4b4" stroke-width="2.8"/><path d="M993.78 520.79A21.5 21.5 0 1 1 1007.15 527.02" fill="none" stroke="#b4b4b4" stroke-width="2.4"/><path d="M1014.92 492.91A14 14 0 0 1 1021.69 511.52" fill="none" stroke="#b4b4b4" stroke-width="2.3"/><path d="M1003.08 518.29A14 14 0 0 1 996.31 499.68" fill="none" stroke="#b4b4b4" stroke-width="2.3"/><path d="M1002.77 710.03A29.5 29.5 0 1 1 1035.09 694.96Z" fill="none" stroke="#b4b4b4" stroke-width="2.8"/><path d="M1010.85 702.62A21.5 21.5 0 1 1 1024.22 696.39" fill="none" stroke="#b4b4b4" stroke-width="2.4"/><path d="M1003.08 668.51A14 14 0 0 1 1021.69 675.28" fill="none" stroke="#b4b4b4" stroke-width="2.3"/><path d="M1014.92 693.89A14 14 0 0 1 996.31 687.12" fill="none" stroke="#b4b4b4" stroke-width="2.3"/><path d="M552.54 803.19A29.5 29.5 0 1 1 549.44 838.72Z" fill="none" stroke="#b4b4b4" stroke-width="2.8"/><path d="M554.92 813.90A21.5 21.5 0 1 1 553.64 828.58" fill="none" stroke="#b4b4b4" stroke-width="2.4"/><path d="M588.35 824.22A14 14 0 0 1 573.18 836.95" fill="none" stroke="#b4b4b4" stroke-width="2.3"/><path d="M560.45 821.78A14 14 0 0 1 575.62 809.05" fill="none" stroke="#b4b4b4" stroke-width="2.3"/><path d="M724.92 851.11A29.5 29.5 0 1 1 712.72 884.62Z" fill="none" stroke="#b4b4b4" stroke-width="2.8"/><path d="M724.44 862.06A21.5 21.5 0 1 1 719.40 875.92" fill="none" stroke="#b4b4b4" stroke-width="2.4"/><path d="M754.06 880.69A14 14 0 0 1 736.11 889.06" fill="none" stroke="#b4b4b4" stroke-width="2.3"/><path d="M727.74 871.11A14 14 0 0 1 745.69 862.74" fill="none" stroke="#b4b4b4" stroke-width="2.3"/><path d="M883.44 802.96A29.5 29.5 0 1 1 882.19 838.60Z" fill="none" stroke="#b4b4b4" stroke-width="2.8"/><path d="M886.37 813.53A21.5 21.5 0 1 1 885.86 828.26" fill="none" stroke="#b4b4b4" stroke-width="2.4"/><path d="M920.29 822.09A14 14 0 0 1 905.81 835.59" fill="none" stroke="#b4b4b4" stroke-width="2.3"/><path d="M892.31 821.11A14 14 0 0 1 906.79 807.61" fill="none" stroke="#b4b4b4" stroke-width="2.3"/><rect x="713.8" y="384.70000000000005" width="89.40000000000009" height="31.799999999999955" rx="4" fill="none" stroke="#b4b4b4" stroke-width="2.6"/><rect x="688" y="396.1" width="25.799999999999955" height="9" fill="#b4b4b4" opacity="0.85"/><rect x="803.2" y="396.1" width="25.299999999999955" height="9" fill="#b4b4b4" opacity="0.85"/><rect x="713.8" y="420.0" width="89.40000000000009" height="31.799999999999955" rx="4" fill="none" stroke="#b4b4b4" stroke-width="2.6"/><rect x="688" y="431.4" width="25.799999999999955" height="9" fill="#b4b4b4" opacity="0.85"/><rect x="803.2" y="431.4" width="25.299999999999955" height="9" fill="#b4b4b4" opacity="0.85"/><rect x="713.8" y="455.3" width="89.40000000000009" height="31.799999999999955" rx="4" fill="none" stroke="#b4b4b4" stroke-width="2.6"/><rect x="688" y="466.7" width="25.799999999999955" height="9" fill="#b4b4b4" opacity="0.85"/><rect x="803.2" y="466.7" width="25.299999999999955" height="9" fill="#b4b4b4" opacity="0.85"/><rect x="637.4" y="391.8" width="30.600000000000023" height="85.80000000000001" rx="4" fill="none" stroke="#b4b4b4" stroke-width="2.6"/><rect x="648.1" y="374" width="9" height="18" fill="#b4b4b4" opacity="0.85"/><rect x="648.1" y="477" width="9" height="20" fill="#b4b4b4" opacity="0.85"/><rect x="812.6" y="568" width="32.39999999999998" height="88.20000000000005" rx="4" fill="none" stroke="#b4b4b4" stroke-width="2.6"/><rect x="824.9" y="549" width="9" height="19" fill="#b4b4b4" opacity="0.85"/><rect x="824.9" y="656" width="9" height="18" fill="#b4b4b4" opacity="0.85"/><rect x="551.8" y="508.2" width="60.80000000000007" height="31.80000000000001" rx="7" fill="none" stroke="#b4b4b4" stroke-width="2.6"/><rect x="577" y="511.8" width="3.5" height="24.7" fill="#b4b4b4"/><rect x="584.4" y="511.8" width="4.4" height="24.7" fill="#b4b4b4"/><rect x="554.4" y="577" width="54.700000000000045" height="69.79999999999995" rx="0" fill="none" stroke="#b4b4b4" stroke-width="3"/><rect x="890.3" y="540.9" width="54.10000000000002" height="142.30000000000007" rx="4" fill="none" stroke="#b4b4b4" stroke-width="2.6"/><path d="M697.4 560V630L705 637.4H733V643H755V637.4H777L784.4 630V560L777 550.3H755V545H733V550.3H705Z" fill="none" stroke="#b4b4b4" stroke-width="2.4"/><circle cx="739.7" cy="593.8" r="26.5" fill="none" stroke="#b4b4b4" stroke-width="2.4"/><rect x="723.9" y="577.4" width="33.5" height="34.10000000000002" rx="0" fill="none" stroke="#b4b4b4" stroke-width="1.6"/><circle cx="739.7" cy="593.8" r="9" fill="none" stroke="#dddddd" stroke-width="1.2"/><circle cx="635" cy="753.5" r="36.5" fill="none" stroke="#b4b4b4" stroke-width="2.6"/><rect x="623" y="738" width="8" height="29" fill="#b4b4b4"/><rect x="638" y="738" width="8" height="29" fill="#b4b4b4"/><path d="M782 793.5H842L847 780A36.4 36.4 0 1 0 777 780Z" fill="none" stroke="#b4b4b4" stroke-width="2.6"/><polyline points="776.0,772.5 847.0,772.5" fill="none" stroke="#b4b4b4" stroke-width="2.2" stroke-linejoin="round" stroke-linecap="round" opacity="1"/><text x="768" y="307" font-size="23" fill="#ababab" font-family="Liberation Sans" text-anchor="start">LED1</text><text x="718" y="380" font-size="23" fill="#ababab" font-family="Liberation Sans" text-anchor="start">R4</text><text x="716" y="420" font-size="23" fill="#ababab" font-family="Liberation Sans" text-anchor="start">R3</text><text x="716" y="455" font-size="23" fill="#ababab" font-family="Liberation Sans" text-anchor="start">R1</text><text x="728" y="409" font-size="23" fill="#ababab" font-family="Liberation Sans" text-anchor="start">10M</text><text x="729" y="445" font-size="23" fill="#ababab" font-family="Liberation Sans" text-anchor="start">3.3M</text><text x="727" y="479" font-size="23" fill="#ababab" font-family="Liberation Sans" text-anchor="start">560</text><text x="555" y="505" font-size="23" fill="#ababab" font-family="Liberation Sans" text-anchor="start">100n</text><text x="576" y="561" font-size="23" fill="#ababab" font-family="Liberation Sans" text-anchor="start">C2</text><text x="558" y="575" font-size="23" fill="#ababab" font-family="Liberation Sans" text-anchor="start">IC1</text><text x="555" y="667" font-size="23" fill="#ababab" font-family="Liberation Sans" text-anchor="start">LM555D</text><text x="891" y="535" font-size="23" fill="#ababab" font-family="Liberation Sans" text-anchor="start">IC2</text><text x="670" y="738" font-size="23" fill="#ababab" font-family="Liberation Sans" text-anchor="start">C1</text><text x="673" y="783" font-size="23" fill="#ababab" font-family="Liberation Sans" text-anchor="start">1uF</text><text x="778" y="729" font-size="23" fill="#ababab" font-family="Liberation Sans" text-anchor="start">T1</text><text x="655" y="899" font-size="23" fill="#ababab" font-family="Liberation Sans" text-anchor="start">LED6</text><text x="597" y="350" font-size="23" fill="#ababab" font-family="Liberation Sans" text-anchor="start" transform="rotate(-45 597 350)">LED2</text><text x="930" y="374" font-size="25" fill="#ababab" font-family="Liberation Sans" text-anchor="start" transform="rotate(40 930 374)">LED10</text><text x="467" y="484" font-size="23" fill="#ababab" font-family="Liberation Sans" text-anchor="start" transform="rotate(-62 467 484)">LED3</text><text x="425" y="610" font-size="23" fill="#ababab" font-family="Liberation Sans" text-anchor="start" transform="rotate(62 425 610)">LED4</text><text x="492" y="791" font-size="23" fill="#ababab" font-family="Liberation Sans" text-anchor="start" transform="rotate(32 492 791)">LED5</text><text x="1024" y="530" font-size="23" fill="#ababab" font-family="Liberation Sans" text-anchor="start" transform="rotate(62 1024 530)">LED9</text><text x="1003" y="768" font-size="23" fill="#ababab" font-family="Liberation Sans" text-anchor="start" transform="rotate(-62 1003 768)">LED8</text><text x="849" y="891" font-size="23" fill="#ababab" font-family="Liberation Sans" text-anchor="start" transform="rotate(-45 849 891)">LED7</text><text x="632" y="479" font-size="23" fill="#ababab" font-family="Liberation Sans" text-anchor="start" transform="rotate(-90 632 479)">R2</text><text x="660" y="466" font-size="23" fill="#ababab" font-family="Liberation Sans" text-anchor="start" transform="rotate(-90 660 466)">10k</text><text x="689" y="637" font-size="23" fill="#ababab" font-family="Liberation Sans" text-anchor="start" transform="rotate(-90 689 637)">S1</text><text x="806" y="657" font-size="23" fill="#ababab" font-family="Liberation Sans" text-anchor="start" transform="rotate(-90 806 657)">R5</text><text x="838" y="652" font-size="23" fill="#ababab" font-family="Liberation Sans" text-anchor="start" transform="rotate(-90 838 652)">3.3M</text><text x="926" y="625" font-size="23" fill="#ababab" font-family="Liberation Sans" text-anchor="start" transform="rotate(-90 926 625)">4017D</text><text x="717" y="546" font-size="22" fill="#c8c8c8" font-family="Liberation Sans" text-anchor="start" transform="rotate(-90 717 546)">2</text><text x="780" y="546" font-size="22" fill="#c8c8c8" font-family="Liberation Sans" text-anchor="start" transform="rotate(-90 780 546)">4</text><text x="717" y="652" font-size="22" fill="#c8c8c8" font-family="Liberation Sans" text-anchor="start" transform="rotate(-90 717 652)">1</text><text x="780" y="653" font-size="22" fill="#c8c8c8" font-family="Liberation Sans" text-anchor="start" transform="rotate(-90 780 653)">3</text><path d="M614 725H626M620 719V731" stroke="#c8c8c8" stroke-width="2.2"/></g><g opacity="0.9"><polyline points="511.4,296.5 768.0,296.5 847.0,374.0 884.4,336.5 908.0,336.5 1022.0,451.8 1022.0,497.4 968.0,550.3" fill="none" stroke="#e8425f" stroke-width="9.4" stroke-linejoin="round" stroke-linecap="round" opacity="1"/><polyline points="847.0,374.0 844.4,374.0 844.4,419.7 828.5,435.6" fill="none" stroke="#e8425f" stroke-width="9.4" stroke-linejoin="round" stroke-linecap="round" opacity="1"/><polyline points="511.2,296.5 511.2,432.0 456.0,487.0 456.0,499.0 468.0,508.0 487.0,508.0 523.0,545.0 523.0,626.0 535.0,638.8" fill="none" stroke="#e8425f" stroke-width="9.4" stroke-linejoin="round" stroke-linecap="round" opacity="1"/><polyline points="589.0,356.0 581.0,384.0 476.3,492.2" fill="none" stroke="#e8425f" stroke-width="9.4" stroke-linejoin="round" stroke-linecap="round" opacity="1"/><polyline points="589.0,356.0 591.0,372.0 688.0,470.9" fill="none" stroke="#e8425f" stroke-width="9.4" stroke-linejoin="round" stroke-linecap="round" opacity="1"/><polyline points="758.5,313.0 640.0,420.0" fill="none" stroke="#e8425f" stroke-width="9.4" stroke-linejoin="round" stroke-linecap="round" opacity="1"/><polyline points="573.0,489.6 523.0,548.5" fill="none" stroke="#e8425f" stroke-width="9.4" stroke-linejoin="round" stroke-linecap="round" opacity="1"/><polyline points="573.0,489.6 662.0,489.6 670.0,497.6 670.0,511.8 618.8,563.0 618.8,585.9" fill="none" stroke="#e8425f" stroke-width="9.4" stroke-linejoin="round" stroke-linecap="round" opacity="1"/><polyline points="546.5,585.9 546.5,541.8 564.0,523.2" fill="none" stroke="#e8425f" stroke-width="9.4" stroke-linejoin="round" stroke-linecap="round" opacity="1"/><polyline points="546.5,638.8 546.7,677.3 621.2,751.8" fill="none" stroke="#e8425f" stroke-width="9.4" stroke-linejoin="round" stroke-linecap="round" opacity="1"/><polyline points="828.5,470.9 828.5,493.0 771.5,550.0 771.5,640.0" fill="none" stroke="#e8425f" stroke-width="9.4" stroke-linejoin="round" stroke-linecap="round" opacity="1"/><polyline points="829.4,682.3 838.2,673.8 878.0,673.8" fill="none" stroke="#e8425f" stroke-width="9.4" stroke-linejoin="round" stroke-linecap="round" opacity="1"/><rect x="529.7" y="580.8" width="30.899999999999977" height="9" fill="#e8425f"/><rect x="539.0" y="580.8" width="21.6" height="9" fill="#f26685" opacity="0.85"/><rect x="603" y="580.8" width="30.799999999999955" height="9" fill="#e8425f"/><rect x="603.0" y="580.8" width="21.6" height="9" fill="#f26685" opacity="0.85"/><rect x="529.7" y="599.0" width="30.899999999999977" height="9" fill="#e8425f"/><rect x="539.0" y="599.0" width="21.6" height="9" fill="#f26685" opacity="0.85"/><rect x="603" y="599.0" width="30.799999999999955" height="9" fill="#e8425f"/><rect x="603.0" y="599.0" width="21.6" height="9" fill="#f26685" opacity="0.85"/><rect x="529.7" y="616.7" width="30.899999999999977" height="9" fill="#e8425f"/><rect x="539.0" y="616.7" width="21.6" height="9" fill="#f26685" opacity="0.85"/><rect x="603" y="616.7" width="30.799999999999955" height="9" fill="#e8425f"/><rect x="603.0" y="616.7" width="21.6" height="9" fill="#f26685" opacity="0.85"/><rect x="529.7" y="634.3" width="30.899999999999977" height="9" fill="#e8425f"/><rect x="539.0" y="634.3" width="21.6" height="9" fill="#f26685" opacity="0.85"/><rect x="603" y="634.3" width="30.799999999999955" height="9" fill="#e8425f"/><rect x="603.0" y="634.3" width="21.6" height="9" fill="#f26685" opacity="0.85"/><rect x="859.7" y="545.0" width="29.299999999999955" height="10.6" fill="#e8425f"/><rect x="868.5" y="545.0" width="20.5" height="10.6" fill="#f26685" opacity="0.85"/><rect x="945.6" y="545.0" width="28.199999999999932" height="10.6" fill="#e8425f"/><rect x="945.6" y="545.0" width="19.7" height="10.6" fill="#f26685" opacity="0.85"/><rect x="859.7" y="563.1" width="29.299999999999955" height="10.6" fill="#e8425f"/><rect x="868.5" y="563.1" width="20.5" height="10.6" fill="#f26685" opacity="0.85"/><rect x="945.6" y="563.1" width="28.199999999999932" height="10.6" fill="#e8425f"/><rect x="945.6" y="563.1" width="19.7" height="10.6" fill="#f26685" opacity="0.85"/><rect x="859.7" y="579.6" width="29.299999999999955" height="10.6" fill="#e8425f"/><rect x="868.5" y="579.6" width="20.5" height="10.6" fill="#f26685" opacity="0.85"/><rect x="945.6" y="579.6" width="28.199999999999932" height="10.6" fill="#e8425f"/><rect x="945.6" y="579.6" width="19.7" height="10.6" fill="#f26685" opacity="0.85"/><rect x="859.7" y="597.9000000000001" width="29.299999999999955" height="10.6" fill="#e8425f"/><rect x="868.5" y="597.9000000000001" width="20.5" height="10.6" fill="#f26685" opacity="0.85"/><rect x="945.6" y="597.9000000000001" width="28.199999999999932" height="10.6" fill="#e8425f"/><rect x="945.6" y="597.9000000000001" width="19.7" height="10.6" fill="#f26685" opacity="0.85"/><rect x="859.7" y="615.6" width="29.299999999999955" height="10.6" fill="#e8425f"/><rect x="868.5" y="615.6" width="20.5" height="10.6" fill="#f26685" opacity="0.85"/><rect x="945.6" y="615.6" width="28.199999999999932" height="10.6" fill="#e8425f"/><rect x="945.6" y="615.6" width="19.7" height="10.6" fill="#f26685" opacity="0.85"/><rect x="859.7" y="632.5" width="29.299999999999955" height="10.6" fill="#e8425f"/><rect x="868.5" y="632.5" width="20.5" height="10.6" fill="#f26685" opacity="0.85"/><rect x="945.6" y="632.5" width="28.199999999999932" height="10.6" fill="#e8425f"/><rect x="945.6" y="632.5" width="19.7" height="10.6" fill="#f26685" opacity="0.85"/><rect x="859.7" y="650.9000000000001" width="29.299999999999955" height="10.6" fill="#e8425f"/><rect x="868.5" y="650.9000000000001" width="20.5" height="10.6" fill="#f26685" opacity="0.85"/><rect x="945.6" y="650.9000000000001" width="28.199999999999932" height="10.6" fill="#e8425f"/><rect x="945.6" y="650.9000000000001" width="19.7" height="10.6" fill="#f26685" opacity="0.85"/><rect x="859.7" y="668.1" width="29.299999999999955" height="10.6" fill="#e8425f"/><rect x="868.5" y="668.1" width="20.5" height="10.6" fill="#f26685" opacity="0.85"/><rect x="945.6" y="668.1" width="28.199999999999932" height="10.6" fill="#e8425f"/><rect x="945.6" y="668.1" width="19.7" height="10.6" fill="#f26685" opacity="0.85"/><polyline points="652.3,505.6 635.6,523.2 598.5,523.2 598.5,601.8 560.6,603.5" fill="none" stroke="#e8425f" stroke-width="2.6" stroke-linejoin="round" stroke-linecap="round" opacity="1"/><polyline points="618.0,603.5 618.0,621.2" fill="none" stroke="#e8425f" stroke-width="2.6" stroke-linejoin="round" stroke-linecap="round" opacity="1"/><polyline points="558.8,626.5 633.8,701.0 633.8,755.0 645.6,766.5 677.4,766.5 846.5,593.8 888.5,593.8 897.2,586.3 945.7,586.3" fill="none" stroke="#e8425f" stroke-width="2.6" stroke-linejoin="round" stroke-linecap="round" opacity="1"/><polyline points="688.0,400.3 688.0,419.0 709.0,440.0 709.0,639.0 649.8,698.5 649.8,752.4" fill="none" stroke="#e8425f" stroke-width="2.6" stroke-linejoin="round" stroke-linecap="round" opacity="1"/><polyline points="467.0,524.0 467.0,618.5 619.2,770.4 681.0,770.4 810.0,639.0 870.0,639.0" fill="none" stroke="#e8425f" stroke-width="2.6" stroke-linejoin="round" stroke-linecap="round" opacity="1"/><polyline points="478.0,697.0 498.6,677.3" fill="none" stroke="#e8425f" stroke-width="2.6" stroke-linejoin="round" stroke-linecap="round" opacity="1"/><polyline points="589.7,832.4 645.6,888.8 864.4,888.8 1028.6,724.3 1028.6,629.0 975.0,578.5 855.0,578.5" fill="none" stroke="#e8425f" stroke-width="2.6" stroke-linejoin="round" stroke-linecap="round" opacity="1"/><polyline points="757.8,877.0 757.8,734.7 846.5,646.7 888.5,646.7 897.2,656.4 945.7,656.4" fill="none" stroke="#e8425f" stroke-width="2.6" stroke-linejoin="round" stroke-linecap="round" opacity="1"/><polyline points="891.5,355.3 891.5,383.5 852.3,422.4 852.2,575.5 859.7,584.9" fill="none" stroke="#e8425f" stroke-width="2.6" stroke-linejoin="round" stroke-linecap="round" opacity="1"/><polyline points="1003.2,490.3 918.5,568.0 889.0,568.0" fill="none" stroke="#e8425f" stroke-width="2.6" stroke-linejoin="round" stroke-linecap="round" opacity="1"/><polyline points="888.5,602.5 901.5,602.5 944.4,646.8 996.0,644.9 1015.0,664.5" fill="none" stroke="#e8425f" stroke-width="2.6" stroke-linejoin="round" stroke-linecap="round" opacity="1"/><polyline points="889.4,659.6 920.8,692.0 920.8,812.5" fill="none" stroke="#e8425f" stroke-width="2.6" stroke-linejoin="round" stroke-linecap="round" opacity="1"/><polyline points="973.7,668.4 986.5,654.7" fill="none" stroke="#e8425f" stroke-width="2.6" stroke-linejoin="round" stroke-linecap="round" opacity="1"/><polyline points="834.7,620.6 890.0,620.6" fill="none" stroke="#e8425f" stroke-width="2.6" stroke-linejoin="round" stroke-linecap="round" opacity="1"/><polyline points="933.8,618.6 947.9,631.6" fill="none" stroke="#e8425f" stroke-width="2.6" stroke-linejoin="round" stroke-linecap="round" opacity="1"/><circle cx="982" cy="571.5" r="6" fill="#ee5b7a"/><rect x="977" y="570.3" width="10" height="2.4" fill="#d8d8d8"/><circle cx="982" cy="597.4" r="6" fill="#ee5b7a"/><rect x="977" y="596.1999999999999" width="10" height="2.4" fill="#d8d8d8"/><circle cx="896" cy="682" r="6" fill="#ee5b7a"/><rect x="891" y="680.8" width="10" height="2.4" fill="#d8d8d8"/></g><path d="M464 295H488M476 283V307" stroke="#eeeeee" stroke-width="1.5"/><path d="M567.4 365.9H581.4M574.4 358.9V372.9" stroke="#f0f0f0" stroke-width="1.3"/><path d="M733.9 313H747.9M740.9 306V320" stroke="#f0f0f0" stroke-width="1.3"/><path d="M898.6 367H912.6M905.6 360V374" stroke="#f0f0f0" stroke-width="1.3"/><path d="M465 508H479M472 501V515" stroke="#f0f0f0" stroke-width="1.3"/><path d="M465.2 681.2H479.2M472.2 674.2V688.2" stroke="#f0f0f0" stroke-width="1.3"/><path d="M1002 505.6H1016M1009 498.6V512.6" stroke="#f0f0f0" stroke-width="1.3"/><path d="M1002 681.2H1016M1009 674.2V688.2" stroke="#f0f0f0" stroke-width="1.3"/><path d="M567.4 823H581.4M574.4 816V830" stroke="#f0f0f0" stroke-width="1.3"/><path d="M733.9 875.9H747.9M740.9 868.9V882.9" stroke="#f0f0f0" stroke-width="1.3"/><path d="M899.3 821.6H913.3M906.3 814.6V828.6" stroke="#f0f0f0" stroke-width="1.3"/><path d="M573 612H591M582 603V621" stroke="#e6e6e6" stroke-width="1.2"/><path d="M726.7 593.8H752.7M739.7 580.8V606.8" stroke="#e6e6e6" stroke-width="1.2"/><path d="M714 384H726M720 378V390" stroke="#cfcfcf" stroke-width="1.1" opacity="0.8"/><path d="M625 478H637M631 472V484" stroke="#cfcfcf" stroke-width="1.1" opacity="0.8"/><path d="M659 468H671M665 462V474" stroke="#cfcfcf" stroke-width="1.1" opacity="0.8"/><path d="M601 489H613M607 483V495" stroke="#cfcfcf" stroke-width="1.1" opacity="0.8"/><path d="M560 574H572M566 568V580" stroke="#cfcfcf" stroke-width="1.1" opacity="0.8"/><path d="M684 625H696M690 619V631" stroke="#cfcfcf" stroke-width="1.1" opacity="0.8"/><path d="M887 538H899M893 532V544" stroke="#cfcfcf" stroke-width="1.1" opacity="0.8"/><path d="M594 353H606M600 347V359" stroke="#cfcfcf" stroke-width="1.1" opacity="0.8"/><path d="M472 473H484M478 467V479" stroke="#cfcfcf" stroke-width="1.1" opacity="0.8"/><path d="M465 612H477M471 606V618" stroke="#cfcfcf" stroke-width="1.1" opacity="0.8"/><path d="M667 777H679M673 771V783" stroke="#cfcfcf" stroke-width="1.1" opacity="0.8"/><path d="M662 729H674M668 723V735" stroke="#cfcfcf" stroke-width="1.1" opacity="0.8"/><path d="M781 728H793M787 722V734" stroke="#cfcfcf" stroke-width="1.1" opacity="0.8"/><path d="M549 668H561M555 662V674" stroke="#cfcfcf" stroke-width="1.1" opacity="0.8"/><path d="M800 645H812M806 639V651" stroke="#cfcfcf" stroke-width="1.1" opacity="0.8"/><path d="M709 422H721M715 416V428" stroke="#cfcfcf" stroke-width="1.1" opacity="0.8"/><path d="M709 457H721M715 451V463" stroke="#cfcfcf" stroke-width="1.1" opacity="0.8"/><path d="M718 479H730M724 473V485" stroke="#cfcfcf" stroke-width="1.1" opacity="0.8"/><path d="M929 377H941M935 371V383" stroke="#cfcfcf" stroke-width="1.1" opacity="0.8"/><path d="M844 875H856M850 869V881" stroke="#cfcfcf" stroke-width="1.1" opacity="0.8"/><path d="M999 712H1011M1005 706V718" stroke="#cfcfcf" stroke-width="1.1" opacity="0.8"/><path d="M1024 530H1036M1030 524V536" stroke="#cfcfcf" stroke-width="1.1" opacity="0.8"/></svg>
<div class="a" style="left:585px;top:926px;width:331px;height:30px;background:#f1f1f1"></div>
<svg class="a" style="left:585px;top:926px" width="331" height="30" viewBox="0 0 331 30">
  <circle cx="14" cy="15" r="9.3" fill="#1a8ee0"/><rect x="12.6" y="12.5" width="2.8" height="8" fill="#fff"/><circle cx="14" cy="9.2" r="1.7" fill="#fff"/>
  <path d="M37 15Q46 6 55 15Q46 24 37 15Z" fill="none" stroke="#777" stroke-width="1.5"/><circle cx="46" cy="15" r="3.8" fill="#777"/>
  <circle cx="77" cy="13.5" r="7.5" fill="#e2e2e2" stroke="#777" stroke-width="1.4"/><path d="M73 13.5H81M77 9.5V17.5" stroke="#555" stroke-width="1.6"/><path d="M82.5 19L86.5 23" stroke="#9b6a2a" stroke-width="1.8"/>
  <circle cx="109" cy="13.5" r="7.5" fill="#e2e2e2" stroke="#777" stroke-width="1.4"/><path d="M105 13.5H113" stroke="#555" stroke-width="1.6"/><path d="M114.5 19L118.5 23" stroke="#9b6a2a" stroke-width="1.8"/>
  <circle cx="142" cy="13.5" r="7.5" fill="#e2e2e2" stroke="#777" stroke-width="1.4"/><rect x="138.5" y="10.8" width="7" height="5.4" fill="none" stroke="#555" stroke-width="1.3"/><path d="M147.5 19L151.5 23" stroke="#9b6a2a" stroke-width="1.8"/>
  <path d="M171 10H184M171 15H184M171 20H184M173.5 6V24M177.5 6V24M181.5 6V24" stroke="#555" stroke-width="1.4"/>
  <path d="M198 15H205M211 15H218M208 5.5V12M208 18V24.5" stroke="#555" stroke-width="1.3"/><rect x="206.5" y="13.5" width="3" height="3" fill="#555"/>
  <circle cx="241" cy="15" r="10" fill="#e8262e"/><rect x="234" y="13.3" width="14" height="3.4" fill="#fff"/>
  <rect x="260" y="0" width="32" height="30" fill="#0a96d8"/><rect x="265" y="5" width="17" height="14" fill="none" stroke="#9be07a" stroke-width="1" stroke-dasharray="2 1.5"/>
  <path d="M278 13V26L281 23L283.5 28L285.5 27L283 22H287Z" fill="#fff"/>
  <path d="M300 5V24M300 11H310A4 4 0 0 1 310 19H300" fill="none" stroke="#666" stroke-width="1.4"/><path d="M295 15H312" stroke="#8fc6f0" stroke-width="1.8"/>
  <path d="M318 11.5H327L322.5 17Z" fill="#333"/>
</svg>
<svg class="a" style="left:374px;top:938px" width="20" height="26" viewBox="0 0 20 26"><path d="M2 9H20M14.5 0V24" stroke="#fff" stroke-width="1" stroke-dasharray="1 1.5"/></svg>
</body></html>
